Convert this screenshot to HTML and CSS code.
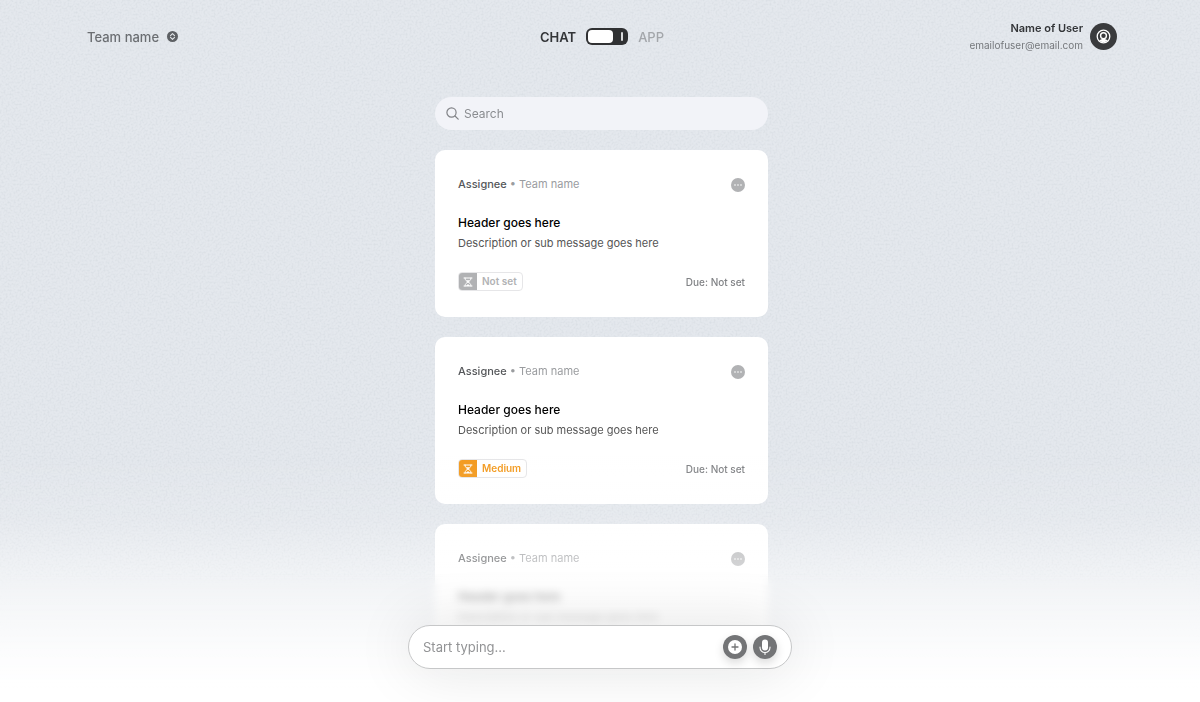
FILE: index.html
```html
<!DOCTYPE html>
<html lang="en">
<head>
  <meta charset="UTF-8">
  <meta name="viewport" content="width=device-width, initial-scale=1.0">
  <title>Chat</title>
  <link rel="stylesheet" href="styles.css">
</head>
<body>

<!-- paper grain -->
<svg class="grain" aria-hidden="true">
  <filter id="noise">
    <feTurbulence type="fractalNoise" baseFrequency="0.5" numOctaves="2"/>
    <feColorMatrix values="0 0 0 0 0.45  0 0 0 0 0.5  0 0 0 0 0.55  1.600 0 0 0 -0.700"/>
  </filter>
  <rect width="100%" height="100%" filter="url(#noise)"/>
</svg>

<!-- shared icons -->
<svg class="sprite" aria-hidden="true">
  <symbol id="more" viewBox="0 0 14 14">
    <circle cx="7" cy="7" r="7" fill="#b1b2b4"/>
    <g fill="#fff">
      <circle cx="4" cy="7" r="0.8"/>
      <circle cx="7" cy="7" r="0.8"/>
      <circle cx="10" cy="7" r="0.8"/>
    </g>
  </symbol>
  <symbol id="hourglass" viewBox="0 0 10 10">
    <path d="M1 1h8M1 9h8M2 1c0 2.400 1.500 3 3 4c1.500-1 3-1.600 3-4M2 9c0-2.400 1.500-3 3-4c1.500 1 3 1.600 3 4" fill="none" stroke="#fff" stroke-width="1" stroke-linecap="round"/>
    <path d="M3.200 3.200h3.600L5 5zM3 9L5 7l2 2z" fill="#fff"/>
  </symbol>
</svg>

<header class="topbar">
  <button class="team" type="button">
    Team name
    <svg width="11" height="11" viewBox="0 0 11 11" aria-hidden="true">
      <circle cx="5.500" cy="5.500" r="5.500" fill="#5d6064"/>
      <path d="M3.500 4.600L5.500 2.700l2 1.900M3.500 6.400l2 1.900 2-1.900" fill="none" stroke="#e2e6ea" stroke-width="1.100" stroke-linecap="round" stroke-linejoin="round"/>
    </svg>
  </button>

  <div class="mode">
    <label class="mode-on" for="mode">CHAT</label>
    <input class="switch" id="mode" type="checkbox" role="switch">
    <label class="mode-off" for="mode">APP</label>
  </div>

  <div class="user">
    <div class="user-text">
      <div class="user-name">Name of User</div>
      <div class="user-email">emailofuser@email.com</div>
    </div>
    <button class="avatar" type="button" aria-label="Account">
      <svg width="27" height="27" viewBox="0 0 27 27" aria-hidden="true">
        <circle cx="13.500" cy="13.500" r="13.500" fill="#3a3b3d"/>
        <circle cx="13.500" cy="13.500" r="6.300" fill="none" stroke="#fff" stroke-width="1.300"/>
        <circle cx="13.500" cy="12.700" r="2.900" fill="none" stroke="#fff" stroke-width="1.400"/>
        <path d="M9.300 17.600c1.200-2.300 7.200-2.300 8.400 0a6 6 0 0 1-8.400 0z" fill="#fff"/>
      </svg>
    </button>
  </div>
</header>

<main class="feed">
  <label class="search">
    <svg width="13" height="13" viewBox="0 0 13 13" fill="none" stroke="#808286" stroke-width="1.200" stroke-linecap="round" aria-hidden="true">
      <circle cx="5.500" cy="5.500" r="4.600"/>
      <path d="M9 9l3.200 3.200"/>
    </svg>
    <input type="search" placeholder="Search" aria-label="Search">
  </label>

  <article class="card">
    <div class="row">
      <p class="meta"><span class="assignee">Assignee</span> • Team name</p>
      <button class="more" type="button" aria-label="More"><svg width="14" height="14"><use href="#more"/></svg></button>
    </div>
    <h2>Header goes here</h2>
    <p class="desc">Description or sub message goes here</p>
    <div class="row">
      <span class="priority">
        <span class="priority-icon"><svg width="10" height="10"><use href="#hourglass"/></svg></span>
        <span class="priority-text">Not set</span>
      </span>
      <span class="due">Due: Not set</span>
    </div>
  </article>

  <article class="card">
    <div class="row">
      <p class="meta"><span class="assignee">Assignee</span> • Team name</p>
      <button class="more" type="button" aria-label="More"><svg width="14" height="14"><use href="#more"/></svg></button>
    </div>
    <h2>Header goes here</h2>
    <p class="desc">Description or sub message goes here</p>
    <div class="row">
      <span class="priority medium">
        <span class="priority-icon"><svg width="10" height="10"><use href="#hourglass"/></svg></span>
        <span class="priority-text">Medium</span>
      </span>
      <span class="due">Due: Not set</span>
    </div>
  </article>

  <article class="card">
    <div class="row">
      <p class="meta"><span class="assignee">Assignee</span> • Team name</p>
      <button class="more" type="button" aria-label="More"><svg width="14" height="14"><use href="#more"/></svg></button>
    </div>
    <h2>Header goes here</h2>
    <p class="desc">Description or sub message goes here</p>
  </article>
</main>

<div class="blur"></div>
<div class="fade"></div>

<form class="composer">
  <input type="text" placeholder="Start typing..." aria-label="Message">
  <button type="button" aria-label="Add">
    <svg width="24" height="24" viewBox="0 0 24 24" aria-hidden="true">
      <circle cx="12" cy="12" r="12" fill="#737476"/>
      <circle cx="12" cy="12" r="7" fill="#fff"/>
      <path d="M12 9v6M9 12h6" stroke="#737476" stroke-width="1.300" stroke-linecap="round"/>
    </svg>
  </button>
  <button type="button" aria-label="Record">
    <svg width="24" height="24" viewBox="0 0 24 24" aria-hidden="true">
      <circle cx="12" cy="12" r="12" fill="#737476"/>
      <rect x="9" y="4.500" width="6" height="11" rx="3" fill="#fff"/>
      <path d="M7 12v0.500a5 5 0 0 0 10 0V12M12 17.500v2" fill="none" stroke="#fff" stroke-width="1.100" stroke-linecap="round"/>
    </svg>
  </button>
</form>

</body>
</html>
```
FILE: styles.css
```css
* {
  box-sizing: border-box;
}

body {
  margin: 0;
  height: 100vh;
  padding-left: 3px;
  overflow: hidden;
  font-family: Inter, "Liberation Sans", sans-serif;
  background-color: #e4e8ed;
}

h2,
p {
  margin: 0;
}

button {
  display: flex;
  padding: 0;
  border: 0;
  background: none;
  font-family: inherit;
  cursor: pointer;
}

input {
  font-family: inherit;
}

.grain {
  position: fixed;
  inset: 0;
  z-index: -1;
  width: 100%;
  height: 100%;
  opacity: 0.3;
}

.sprite {
  position: absolute;
  width: 0;
  height: 0;
}

/* top bar */
.topbar {
  display: grid;
  grid-template-columns: 1fr auto 1fr;
  align-items: center;
  height: 73px;
  padding: 0 83px 0 84px;
}

.team {
  justify-self: start;
  align-items: center;
  gap: 8px;
  color: #6b6e72;
  font-size: 13px;
  font-weight: 500;
}

.mode {
  display: flex;
  align-items: center;
  gap: 10px;
  font-size: 13px;
  font-weight: 600;
}

.mode-on {
  color: #333538;
}

.mode-off {
  color: #a3a6aa;
  font-weight: 500;
}

.switch {
  appearance: none;
  display: flex;
  align-items: center;
  justify-content: space-between;
  width: 42px;
  height: 17px;
  margin: 0;
  padding: 0 5px 0 2px;
  border-radius: 6px;
  background: #303133;
}

.switch::before {
  content: "";
  width: 25px;
  height: 13px;
  border-radius: 4px;
  background: #fff;
}

.switch::after {
  content: "";
  width: 2px;
  height: 9px;
  border-radius: 1px;
  background: #d8dadc;
}

.user {
  display: flex;
  justify-self: end;
  align-items: center;
  gap: 7px;
  text-align: right;
}

.user-name {
  color: #333538;
  font-size: 11px;
  font-weight: 600;
  line-height: 17px;
}

.user-email {
  color: #75787c;
  font-size: 10px;
  line-height: 17px;
}

/* feed */
.feed {
  display: flex;
  flex-direction: column;
  gap: 20px;
  width: 333px;
  max-width: 90%;
  margin: 24px auto 0;
}

.search {
  display: flex;
  align-items: center;
  gap: 5px;
  height: 33px;
  padding: 0 11px;
  border-radius: 17px;
  background: #f2f3f8;
}

.search input {
  flex: 1;
  min-width: 0;
  padding: 0;
  border: 0;
  outline: 0;
  background: none;
  font-size: 12px;
}

.search input::placeholder {
  color: #8a8c90;
}

.card {
  padding: 24px 23px 26px;
  border-radius: 10px;
  background: #fff;
}

.row {
  display: flex;
  align-items: center;
  justify-content: space-between;
}

.meta {
  color: #9a9c9f;
  font-size: 11px;
  line-height: 21px;
}

.assignee {
  color: #55575a;
  font-weight: 500;
}

.card h2 {
  margin-top: 17px;
  color: #000;
  font-size: 12px;
  font-weight: 500;
  line-height: 21px;
}

.desc {
  margin-bottom: 18px;
  color: #555;
  font-size: 11px;
  line-height: 21px;
}

.priority {
  display: flex;
  overflow: hidden;
  border: 1px solid #e6e6e8;
  border-radius: 4px;
  color: #b1b2b4;
  font-size: 10px;
  font-weight: 600;
  line-height: 17px;
}

.priority-icon {
  display: flex;
  align-items: center;
  justify-content: center;
  width: 19px;
  margin: -1px 0 -1px -1px;
  background: #b1b2b4;
}

.priority-text {
  padding: 0 5px;
}

.medium {
  color: #f39a1e;
}

.medium .priority-icon {
  background: #f39a1e;
}

.due {
  color: #808285;
  font-size: 10px;
  font-weight: 500;
}

/* the feed dissolves behind the composer */
.blur,
.fade {
  position: fixed;
  right: 0;
  bottom: 0;
  left: 0;
  pointer-events: none;
}

.blur {
  height: 130px;
  backdrop-filter: blur(4px);
  mask-image: linear-gradient(transparent, #000 16px);
}

.fade {
  height: 252px;
  background: linear-gradient(rgba(255, 255, 255, 0), rgba(255, 255, 255, 0.15) 28%, rgba(255, 255, 255, 0.4) 44%, rgba(255, 255, 255, 0.65) 60%, rgba(255, 255, 255, 0.9) 82%, #fff 95%);
}

/* composer */
.composer {
  position: fixed;
  right: 0;
  bottom: 33px;
  left: 0;
  display: flex;
  align-items: center;
  gap: 6px;
  width: 384px;
  max-width: 95%;
  height: 44px;
  margin: 0 auto;
  padding: 0 14px;
  border: 1px solid #c6c7c8;
  border-radius: 22px;
  background: #fff;
  box-shadow: 0 0 60px rgba(0, 0, 0, 0.12);
}

.composer input {
  flex: 1;
  min-width: 0;
  padding: 0;
  border: 0;
  outline: 0;
  background: none;
  font-size: 13px;
}

.composer input::placeholder {
  color: #929395;
}

.composer button {
  border-radius: 50%;
  box-shadow: 0 4px 10px rgba(0, 0, 0, 0.15);
}
```
